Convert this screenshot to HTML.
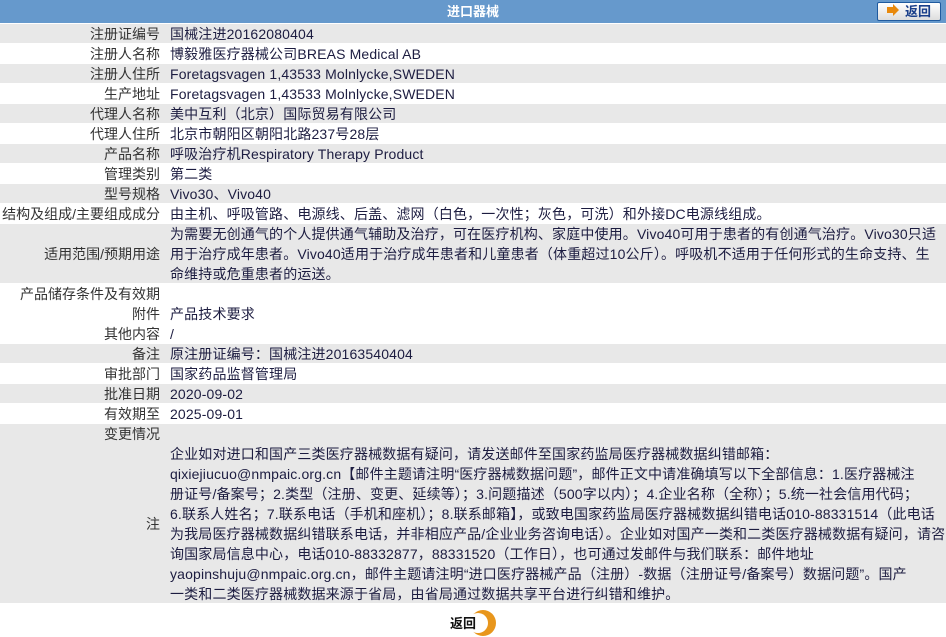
<!DOCTYPE html>
<html><head><meta charset="utf-8"><style>
body{margin:0;width:946px;height:637px;background:#fff;font-family:"Liberation Sans","Noto Sans CJK SC",sans-serif;font-size:14px;overflow:hidden;position:relative}
.hd{height:23px;background:#6699cc;color:#fff;font-weight:bold;font-size:13px;text-align:center;line-height:23px;position:relative}
.hd .b{position:absolute;right:5px;top:2px;width:62px;height:17px;border:1px solid #1f5a9e;border-radius:2px;background:linear-gradient(#fff,#ddd);color:#1a3f8a;font-size:13px;line-height:17px;text-align:left}
.hd .b i{position:absolute;left:9px;top:4px;width:6px;height:6px;background:#e8890c}
.hd .b i:after{content:"";position:absolute;left:6px;top:-3px;border-left:6px solid #e8890c;border-top:6px solid transparent;border-bottom:6px solid transparent}
.hd .b span{position:absolute;left:27px}
.r{display:flex;border-top:1px solid #fff;line-height:20px}
.r.g{background:#e8e8e8}
.l{width:160px;text-align:right;color:#333;white-space:nowrap;flex:none;display:flex;align-items:center;justify-content:flex-end}
.v{padding-left:10px;color:#1c1c40;white-space:nowrap;letter-spacing:0.15px}
.btn{position:absolute;left:449px;top:609px;width:48px;height:28px}
</style></head><body>
<div class="hd">进口器械<div class="b"><i></i><span>返回</span></div></div>
<div class="r g" style="height:19px"><div class="l">注册证编号</div><div class="v">国械注进20162080404</div></div>
<div class="r" style="height:19px"><div class="l">注册人名称</div><div class="v">博毅雅医疗器械公司BREAS Medical AB</div></div>
<div class="r g" style="height:19px"><div class="l">注册人住所</div><div class="v">Foretagsvagen 1,43533 Molnlycke,SWEDEN</div></div>
<div class="r" style="height:19px"><div class="l">生产地址</div><div class="v">Foretagsvagen 1,43533 Molnlycke,SWEDEN</div></div>
<div class="r g" style="height:19px"><div class="l">代理人名称</div><div class="v">美中互利（北京）国际贸易有限公司</div></div>
<div class="r" style="height:19px"><div class="l">代理人住所</div><div class="v">北京市朝阳区朝阳北路237号28层</div></div>
<div class="r g" style="height:19px"><div class="l">产品名称</div><div class="v">呼吸治疗机Respiratory Therapy Product</div></div>
<div class="r" style="height:19px"><div class="l">管理类别</div><div class="v">第二类</div></div>
<div class="r g" style="height:19px"><div class="l">型号规格</div><div class="v">Vivo30、Vivo40</div></div>
<div class="r" style="height:19px"><div class="l" style="margin-left:-2px;width:162px">结构及组成/主要组成成分</div><div class="v">由主机、呼吸管路、电源线、后盖、滤网（白色，一次性；灰色，可洗）和外接DC电源线组成。</div></div>
<div class="r g" style="height:59px"><div class="l">适用范围/预期用途</div><div class="v">为需要无创通气的个人提供通气辅助及治疗，可在医疗机构、家庭中使用。Vivo40可用于患者的有创通气治疗。Vivo30只适<br>用于治疗成年患者。Vivo40适用于治疗成年患者和儿童患者（体重超过10公斤）。呼吸机不适用于任何形式的生命支持、生<br>命维持或危重患者的运送。</div></div>
<div class="r" style="height:19px"><div class="l">产品储存条件及有效期</div><div class="v"></div></div>
<div class="r" style="height:19px"><div class="l">附件</div><div class="v">产品技术要求</div></div>
<div class="r" style="height:19px"><div class="l">其他内容</div><div class="v">/</div></div>
<div class="r g" style="height:19px"><div class="l">备注</div><div class="v">原注册证编号：国械注进20163540404</div></div>
<div class="r" style="height:19px"><div class="l">审批部门</div><div class="v">国家药品监督管理局</div></div>
<div class="r g" style="height:19px"><div class="l">批准日期</div><div class="v">2020-09-02</div></div>
<div class="r" style="height:19px"><div class="l">有效期至</div><div class="v">2025-09-01</div></div>
<div class="r g" style="height:19px"><div class="l">变更情况</div><div class="v"></div></div>
<div class="r g" style="height:159px;border-top:1px solid #e8e8e8"><div class="l">注</div><div class="v">企业如对进口和国产三类医疗器械数据有疑问，请发送邮件至国家药监局医疗器械数据纠错邮箱：<br>qixiejiucuo@nmpaic.org.cn【邮件主题请注明“医疗器械数据问题”，邮件正文中请准确填写以下全部信息：1.医疗器械注<br>册证号/备案号；2.类型（注册、变更、延续等）；3.问题描述（500字以内）；4.企业名称（全称）；5.统一社会信用代码；<br>6.联系人姓名；7.联系电话（手机和座机）；8.联系邮箱】，或致电国家药监局医疗器械数据纠错电话010-88331514（此电话<br>为我局医疗器械数据纠错联系电话，并非相应产品/企业业务咨询电话）。企业如对国产一类和二类医疗器械数据有疑问，请咨<br>询国家局信息中心，电话010-88332877，88331520（工作日），也可通过发邮件与我们联系：邮件地址<br>yaopinshuju@nmpaic.org.cn，邮件主题请注明“进口医疗器械产品（注册）-数据（注册证号/备案号）数据问题”。国产<br>一类和二类医疗器械数据来源于省局，由省局通过数据共享平台进行纠错和维护。</div></div>
<svg class="btn" viewBox="0 0 48 28"><circle cx="34" cy="14" r="13" fill="#e8961c"/><circle cx="29" cy="14" r="10" fill="#fff"/><text x="1" y="19" font-family="Liberation Sans,Noto Sans CJK SC,sans-serif" font-size="13" font-weight="bold" fill="#111">返回</text></svg>
</body></html>
